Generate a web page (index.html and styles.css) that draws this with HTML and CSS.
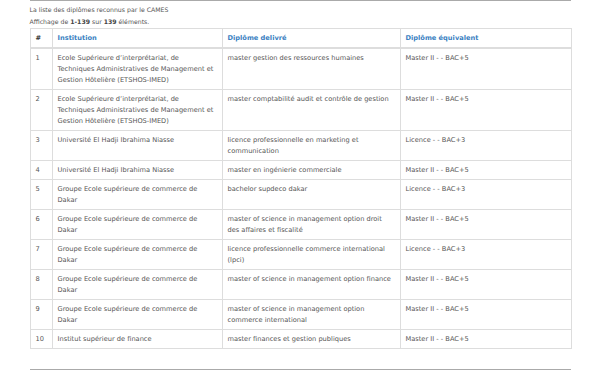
FILE: index.html
```html
<!DOCTYPE html>
<html lang="fr">
<head>
<meta charset="utf-8">
<link rel="stylesheet" href="styles.css">
</head>
<body>
<div class="page">
  <hr class="rule">
  <p class="caption">La liste des diplômes reconnus par le CAMES</p>
  <p class="summary">Affichage de <b>1-139</b> sur <b>139</b> éléments.</p>
  <table class="grid">
    <colgroup>
      <col class="c-num"><col class="c-inst"><col class="c-dip"><col class="c-eq">
    </colgroup>
    <thead>
      <tr><th class="hash">#</th><th><a>Institution</a></th><th><a>Diplôme delivré</a></th><th><a>Diplôme équivalent</a></th></tr>
    </thead>
    <tbody>
      <tr><td>1</td><td>Ecole Supérieure d’interprétariat, de Techniques Administratives de Management et Gestion Hôtelière (ETSHOS-IMED)</td><td>master gestion des ressources humaines</td><td>Master II - - BAC+5</td></tr>
      <tr><td>2</td><td>Ecole Supérieure d’interprétariat, de Techniques Administratives de Management et Gestion Hôtelière (ETSHOS-IMED)</td><td>master comptabilité audit et contrôle de gestion</td><td>Master II - - BAC+5</td></tr>
      <tr><td>3</td><td>Université El Hadji Ibrahima Niasse</td><td>licence professionnelle en marketing et communication</td><td>Licence - - BAC+3</td></tr>
      <tr><td>4</td><td>Université El Hadji Ibrahima Niasse</td><td>master en ingénierie commerciale</td><td>Master II - - BAC+5</td></tr>
      <tr><td>5</td><td>Groupe Ecole supérieure de commerce de Dakar</td><td>bachelor supdeco dakar</td><td>Licence - - BAC+3</td></tr>
      <tr><td>6</td><td>Groupe Ecole supérieure de commerce de Dakar</td><td>master of science in management option droit des affaires et fiscalité</td><td>Master II - - BAC+5</td></tr>
      <tr><td>7</td><td>Groupe Ecole supérieure de commerce de Dakar</td><td>licence professionnelle commerce international (lpci)</td><td>Licence - - BAC+3</td></tr>
      <tr><td>8</td><td>Groupe Ecole supérieure de commerce de Dakar</td><td>master of science in management option finance</td><td>Master II - - BAC+5</td></tr>
      <tr><td>9</td><td>Groupe Ecole supérieure de commerce de Dakar</td><td>master of science in management option commerce international</td><td>Master II - - BAC+5</td></tr>
      <tr><td>10</td><td>Institut supérieur de finance</td><td>master finances et gestion publiques</td><td>Master II - - BAC+5</td></tr>
    </tbody>
  </table>
  <hr class="rule bottom">
</div>
</body>
</html>
```

FILE: styles.css
```css
html, body {
  margin: 0;
  padding: 0;
  background: #fff;
}
body {
  font-family: "DejaVu Sans", "Liberation Sans", sans-serif;
  font-size: 6.65px;
  color: #555;
}
.page {
  width: 541px;
  margin: 0 auto;
}
.rule {
  margin: 0;
  border: 0;
  border-top: 1px solid #aaa;
}
.caption {
  margin: 4px 0 0 0;
  line-height: 10px;
  font-size: 6.2px;
}
.summary {
  margin: 2px 0 1px 0;
  line-height: 10px;
  font-size: 6.2px;
}
.summary b { color: #444; }
.grid {
  width: 541px;
  border-collapse: collapse;
  table-layout: fixed;
}
.c-num { width: 22px; }
.c-inst { width: 170px; }
.c-dip { width: 178px; }
.c-eq { width: 171px; }
.grid th, .grid td {
  border: 1px solid #ddd;
  padding: 4px 5px 3px 5px;
  text-align: left;
  vertical-align: top;
  line-height: 11px;
}
.grid th {
  padding-top: 4px;
  padding-bottom: 3px;
  border-bottom-width: 2px;
  font-weight: bold;
}
.grid th a { color: #3a7fc1; }
.grid th.hash { color: #333; }
.bottom { margin-top: 20px; }
```
